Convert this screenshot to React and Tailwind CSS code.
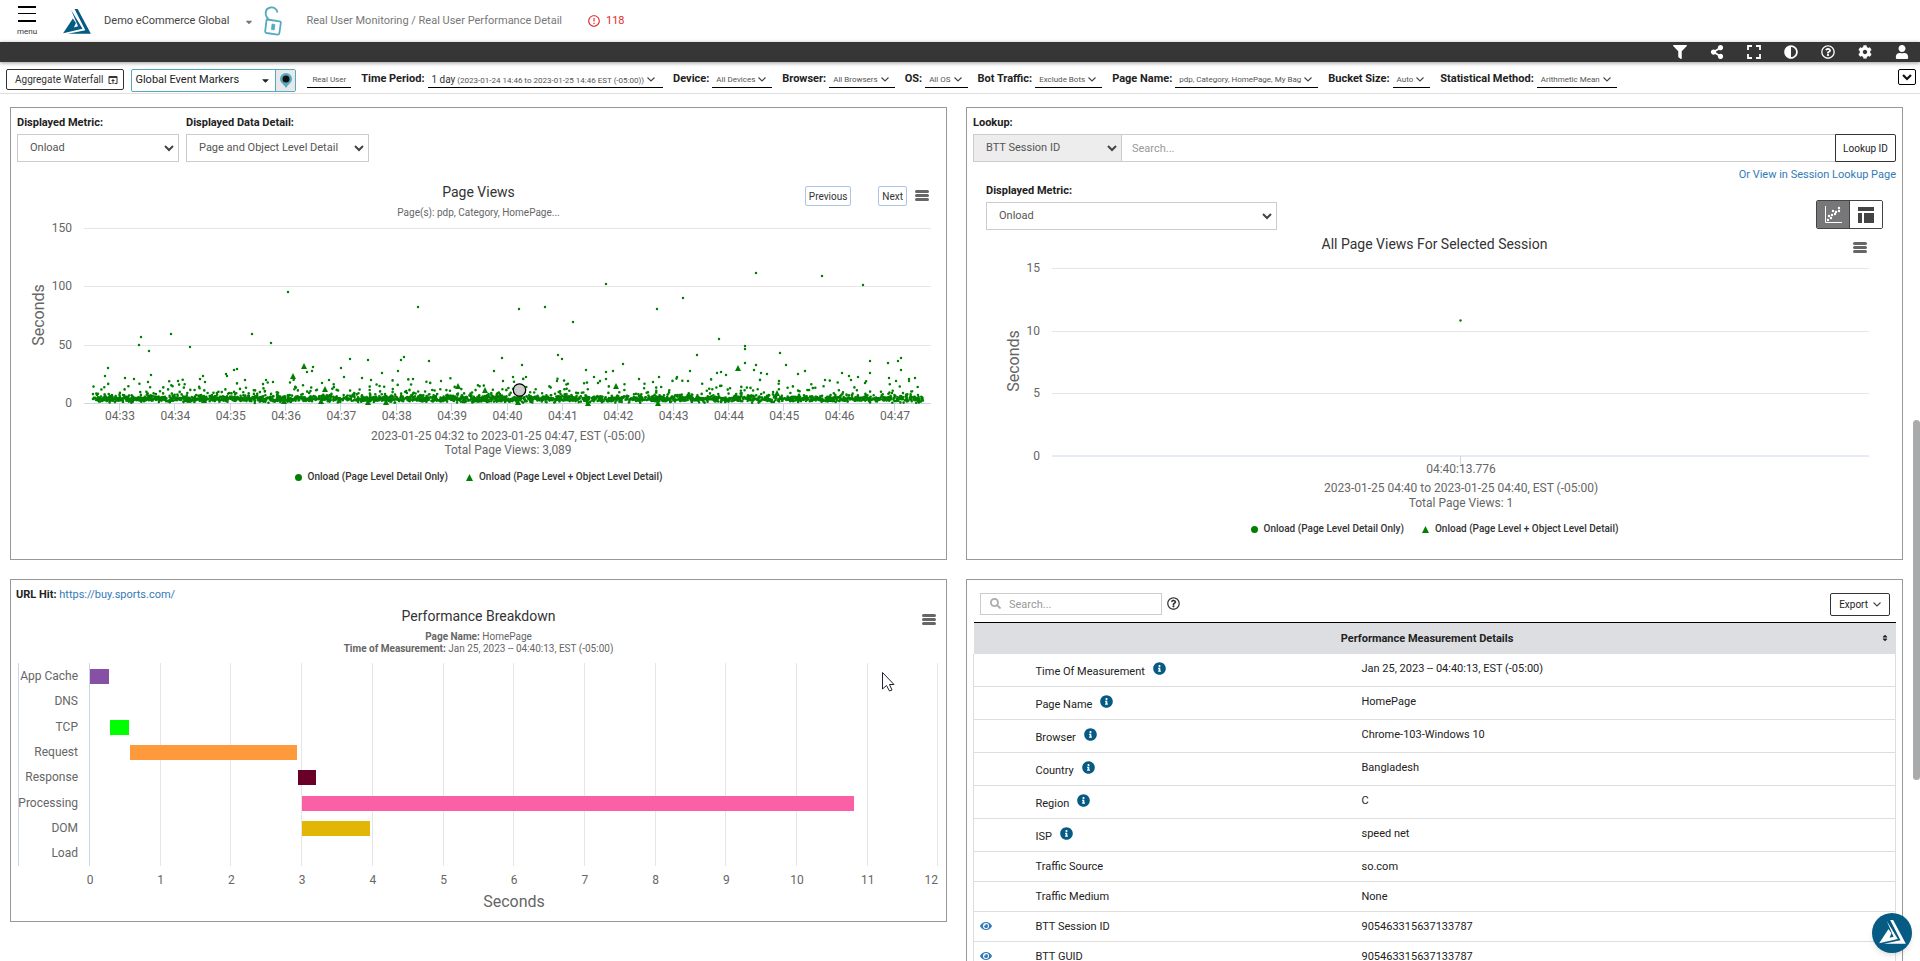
import React, { useState } from "react";
import { FaFilter, FaShareAlt, FaAdjust, FaRegQuestionCircle, FaCog, FaUser, FaSearch, FaInfoCircle, FaEye, FaSort, FaCaretDown } from "react-icons/fa";
import { MdOpenInBrowser, MdErrorOutline } from "react-icons/md";

const FILTERS = [
  { label: "Device:", value: "All Devices" },
  { label: "Browser:", value: "All Browsers" },
  { label: "OS:", value: "All OS" },
  { label: "Bot Traffic:", value: "Exclude Bots" },
  { label: "Page Name:", value: "pdp, Category, HomePage, My Bag" },
  { label: "Bucket Size:", value: "Auto" },
  { label: "Statistical Method:", value: "Arithmetic Mean" },
];

const DETAILS = [
  { name: "Time Of Measurement", value: "Jan 25, 2023 -- 04:40:13, EST (-05:00)", info: true },
  { name: "Page Name", value: "HomePage", info: true },
  { name: "Browser", value: "Chrome-103-Windows 10", info: true },
  { name: "Country", value: "Bangladesh", info: true },
  { name: "Region", value: "C", info: true },
  { name: "ISP", value: "speed net", info: true },
  { name: "Traffic Source", value: "so.com" },
  { name: "Traffic Medium", value: "None" },
  { name: "BTT Session ID", value: "905463315637133787", link: true },
  { name: "BTT GUID", value: "905463315637133787", link: true },
];

// slow page views, in chart coordinates
const SLOW = [
  [277, 70], [407, 85], [130, 115], [128, 123], [138, 129], [160, 112], [179, 125], [241, 112], [260, 121],
  [97, 146], [94, 154], [114, 156], [123, 157], [140, 153], [137, 160], [167, 159], [192, 154], [189, 157],
  [194, 160], [215, 152], [216, 154], [223, 148], [226, 147], [234, 158], [255, 158], [262, 160], [302, 145],
  [301, 149], [296, 150], [330, 146], [339, 137], [333, 155], [357, 138], [351, 156], [360, 158], [371, 151],
  [387, 149], [390, 138], [393, 135], [402, 157], [418, 139], [430, 159], [483, 149], [318, 158], [311, 161],
  [508, 87], [534, 85], [562, 100], [595, 62], [646, 87], [672, 76], [745, 51], [811, 54], [852, 63],
  [708, 117], [734, 124], [734, 127], [734, 141], [745, 143], [743, 148], [750, 151], [756, 152], [769, 131],
  [775, 143], [787, 152], [794, 149], [831, 151], [859, 139], [859, 151], [877, 141], [887, 139], [890, 136],
  [890, 148], [878, 156], [898, 157], [904, 156], [885, 159], [898, 159], [491, 136], [511, 143], [502, 155],
  [515, 155], [492, 159], [547, 133], [551, 137], [575, 148], [583, 155], [546, 159], [595, 150], [602, 149],
  [612, 142], [595, 157], [628, 157], [648, 155], [642, 160], [666, 155], [679, 149], [686, 133], [677, 159],
  [706, 151], [710, 150], [715, 153], [814, 158], [838, 154], [847, 155], [840, 158], [854, 161], [768, 159],
];

const OBJECT_LEVEL = [
  [293, 144], [282, 154], [314, 167], [447, 164], [474, 168], [357, 180], [375, 180], [310, 179], [273, 179],
  [193, 178], [486, 173], [605, 164], [727, 146], [647, 181], [577, 181], [766, 171], [507, 180],
];

const TIMES = ["04:33", "04:34", "04:35", "04:36", "04:37", "04:38", "04:39", "04:40", "04:41", "04:42", "04:43", "04:44", "04:45", "04:46", "04:47"];

const PHASES = [
  { name: "App Cache", x: 79, w: 19, color: "#8650a5" },
  { name: "DNS" },
  { name: "TCP", x: 99, w: 19, color: "#00ff00" },
  { name: "Request", x: 119, w: 167, color: "#ff9a3c" },
  { name: "Response", x: 287, w: 18, color: "#680028" },
  { name: "Processing", x: 291, w: 552, color: "#fb5fa5" },
  { name: "DOM", x: 291, w: 68, color: "#e2b607" },
  { name: "Load" },
];

function random(seed) {
  let s = seed;
  return () => {
    s = (s * 16807) % 2147483647;
    return s / 2147483647;
  };
}

// the dense band of fast page views along the bottom of the chart
function fastViews() {
  const rnd = random(77);
  let d = "";
  for (let i = 0; i < 2900; i++) {
    const x = 82 + rnd() * 830;
    const spread = (rnd() + rnd() + rnd() - 1.5) * 3;
    const tail = rnd() < 0.25 ? Math.min(-Math.log(1 - rnd()) * 5, 19) : 0;
    d += `M${x.toFixed(1)} ${(177 + spread - tail).toFixed(1)}h0`;
  }
  return d;
}

const FAST_PATH = fastViews();
const SLOW_PATH = SLOW.map(([x, y]) => `M${x} ${y}h0`).join("");

function Logo({ className }) {
  return (
    <svg viewBox="0 0 80 72" className={className} fill="currentColor" aria-hidden="true">
      <path d="M33 0 L42 0 L80 71 L14 71 L64 61 Z" />
      <path d="M23 3 L56 57 L0 70 L28 27 L37 40 L31 53 L43 50 Z" />
    </svg>
  );
}

function Chevron() {
  return (
    <svg viewBox="0 0 8 5" className="h-[5px] w-[8px]" fill="none" stroke="#444" aria-hidden="true">
      <path d="M0.500 0.500 L4 4 L7.500 0.500" strokeWidth="1.100" />
    </svg>
  );
}

function MenuButton({ className = "" }) {
  return (
    <button aria-label="Chart menu" className={`flex w-[14px] flex-col gap-px ${className}`}>
      <span className="h-[3px] w-full rounded-sm bg-[#666]" />
      <span className="h-[3px] w-full rounded-sm bg-[#666]" />
      <span className="h-[3px] w-full rounded-sm bg-[#666]" />
    </button>
  );
}

function SelectBox({ id, label, value, className, selectClass = "bg-white", hideLabel }) {
  return (
    <div className={className}>
      {!hideLabel && (
        <label htmlFor={id} className="mb-[3px] block text-[11px] leading-4 font-bold text-[#222]">{label}</label>
      )}
      <div className="relative">
        <select
          id={id}
          aria-label={label}
          className={`block h-[28px] w-full appearance-none border border-[#ccc] pl-3 text-[11px] text-[#555] ${selectClass}`}
        >
          <option>{value}</option>
        </select>
        <svg viewBox="0 0 10 7" className="pointer-events-none absolute top-[11px] right-[5px] h-[7px] w-[10px]">
          <path d="M1 1 L5 5 L9 1" fill="none" stroke="#444" strokeWidth="2" />
        </svg>
      </div>
    </div>
  );
}

function Legend() {
  return (
    <div className="flex items-center justify-center gap-[18px] text-[10px] leading-4 font-medium text-[#333]">
      <span className="flex items-center gap-[6px]">
        <svg viewBox="0 0 8 8" className="h-[7px] w-[7px]"><circle cx="4" cy="4" r="4" fill="#008000" /></svg>
        Onload (Page Level Detail Only)
      </span>
      <span className="flex items-center gap-[6px]">
        <svg viewBox="0 0 8 8" className="h-[7px] w-[7px]"><path d="M4 0 L8 8 H0 Z" fill="#008000" /></svg>
        Onload (Page Level + Object Level Detail)
      </span>
    </div>
  );
}

function Header() {
  return (
    <header className="flex h-[42px] items-center bg-white pl-[17px] text-[11px]">
      <button className="flex flex-col items-center text-[8px] leading-3 text-[#333]">
        <span className="mt-px h-[2px] w-[18px] bg-black" />
        <span className="mt-[5px] h-px w-[18px] bg-black" />
        <span className="mt-[6px] mb-1 h-[2px] w-[18px] bg-black" />
        menu
      </button>
      <Logo className="ml-[26px] h-[25px] w-[28px] text-[#055b83]" />
      <button className="ml-[13px] flex items-center gap-[15px] pt-px text-[#444]">
        Demo eCommerce Global
        <FaCaretDown className="text-[10px] text-[#777]" />
      </button>
      <svg viewBox="0 0 18 30" className="ml-[10px] h-[30px] w-[18px]" fill="none" stroke="#55aabf" strokeWidth="1.800" strokeLinejoin="round">
        <path d="M3.500 13.500 L15.500 15.300 Q17 15.500 16.800 17 L15.400 27 Q15 28.800 13.500 28.600 L2.500 27 Q1 26.700 1.200 25.200 L2.600 13.500 Z" />
        <path d="M4.500 13 C0 9 1 2.500 6.500 1.500 C10 1 13 3 13.500 6.500" />
        <path d="M8 18 L11 18.500 L10.300 24 L7.300 23.500 Z" fill="#55aabf" strokeWidth="0.600" />
      </svg>
      <nav className="ml-[24px] text-[#777]">Real User Monitoring / Real User Performance Detail</nav>
      <span className="ml-[25px] flex items-center gap-[5px] text-[#e02b2b]">
        <MdErrorOutline className="text-[14px]" />
        118
      </span>
    </header>
  );
}

function Toolbar() {
  return (
    <div className="relative z-10 flex h-[20px] items-center justify-end gap-[23px] bg-[#363636] pr-[11px] text-[14px] text-white shadow-[0_1px_4px_rgba(0,0,0,0.4)]">
      <button aria-label="Filter"><FaFilter /></button>
      <button aria-label="Share"><FaShareAlt /></button>
      <button aria-label="Full screen">
        <svg viewBox="0 0 14 14" className="h-[14px] w-[14px]" fill="none" stroke="currentColor" strokeWidth="1.800">
          <path d="M1 5V1H5 M9 1H13V5 M13 9V13H9 M5 13H1V9" />
        </svg>
      </button>
      <button aria-label="Contrast"><FaAdjust /></button>
      <button aria-label="Help"><FaRegQuestionCircle /></button>
      <button aria-label="Settings"><FaCog /></button>
      <button aria-label="Account"><FaUser /></button>
    </div>
  );
}

function FilterBar() {
  return (
    <div className="flex h-[32px] items-start border-b border-[#ddd] bg-white pt-[7px] pl-[6px] text-[11px] text-[#222]">
      <button className="flex h-[21px] items-center gap-[4px] rounded-xs border border-[#333] pr-[4px] pl-[8px] text-[10px] text-[#333]">
        Aggregate Waterfall
        <MdOpenInBrowser className="text-[12px]" />
      </button>
      <div className="ml-[7px] flex h-[23px] w-[165px] rounded-xs border border-[#55aabf]">
        <div className="relative flex-1">
          <select aria-label="Global Event Markers" className="h-full w-full appearance-none pl-[3px]">
            <option>Global Event Markers</option>
          </select>
          <FaCaretDown className="pointer-events-none absolute top-[5px] right-1 text-[11px]" />
        </div>
        <button aria-label="Marker settings" className="flex w-[20px] items-center justify-center border-l border-[#55aabf] bg-[#e8e8e8]">
          <svg viewBox="0 0 12 15" className="h-[15px] w-[12px]">
            <path d="M6 15 C4 11 0 10 0 6 A6 6 0 0 1 12 6 C12 10 8 11 6 15 Z" fill="#55aabf" />
            <circle cx="6" cy="6" r="3.500" fill="#111" />
          </svg>
        </button>
      </div>
      <div className="flex items-center gap-[10px] pt-px">
        <button className="ml-[11px] h-[18px] border-b border-black px-[5px] pt-[2px] text-[8px] text-[#555]">Real User</button>
        <div className="flex items-center gap-[3px]">
          <span className="font-bold">Time Period:</span>
          <button className="flex h-[18px] items-center gap-[3px] border-b border-black pt-[2px] pr-[8px] pl-1 text-[8px] text-[#555]">
            <span className="whitespace-pre"><span className="text-[10px] text-[#333]">1 day</span> (2023-01-24 14:46 to 2023-01-25 14:46 EST (-05:00))</span>
            <Chevron />
          </button>
        </div>
        {FILTERS.map((f) => (
          <div key={f.label} className="flex items-center gap-[3px]">
            <span className="font-bold">{f.label}</span>
            <button className="flex h-[18px] items-center gap-[3px] border-b border-black pt-[2px] pr-[6px] pl-1 text-[8px] text-[#555]">
              {f.value}
              <Chevron />
            </button>
          </div>
        ))}
      </div>
      <button aria-label="Collapse filters" className="mr-1 ml-auto flex h-[16px] w-[18px] items-center justify-center rounded-xs border border-black">
        <svg viewBox="0 0 10 7" className="h-[7px] w-[10px]">
          <path d="M1 1 L5 5 L9 1" fill="none" stroke="#111" strokeWidth="2.200" />
        </svg>
      </button>
    </div>
  );
}

function PageViewsPanel() {
  return (
    <section className="border border-[#999] pt-[7px]">
      <div className="flex gap-[7px] pl-[6px]">
        <SelectBox id="metric" label="Displayed Metric:" value="Onload" className="w-[162px]" />
        <SelectBox id="detail" label="Displayed Data Detail:" value="Page and Object Level Detail" className="w-[183px]" />
      </div>
      <div className="relative mt-[20px] text-center">
        <h2 className="text-[14px] leading-5 text-[#333]">Page Views</h2>
        <p className="mt-[3px] text-[10px] leading-4 text-[#666]">Page(s): pdp, Category, HomePage...</p>
        <div className="absolute top-[4px] right-[17px] flex items-start text-[10px] text-[#333]">
          <button className="h-[20px] rounded-xs border border-[#adc4e8] px-[3px]">Previous</button>
          <button className="ml-[27px] h-[20px] rounded-xs border border-[#adc4e8] px-[3px]">Next</button>
          <MenuButton className="mt-1 ml-[8px]" />
        </div>
      </div>
      <svg viewBox="0 0 935 236" className="mt-px w-full">
        {[150, 100, 50].map((v) => (
          <g key={v}>
            <path d={`M73 ${Math.round(181 - v * 1.17) + 0.5}H920`} stroke="#e6e6e6" />
            <text x="61" y={185 - v * 1.17} textAnchor="end" fontSize="12" fill="#666">{v}</text>
          </g>
        ))}
        <text x="61" y="185" textAnchor="end" fontSize="12" fill="#666">0</text>
        <path d="M73 181.500H920" stroke="#ccd6eb" />
        <text x="-93" y="33" textAnchor="middle" fontSize="16" fill="#666" transform="rotate(-90)">Seconds</text>
        {TIMES.map((t, i) => (
          <g key={t}>
            <path d={`M${108.5 + Math.round(i * 55.36)} 181V189`} stroke="#ccd6eb" />
            <text x={109 + i * 55.36} y="198" textAnchor="middle" fontSize="12" fill="#666">{t}</text>
          </g>
        ))}
        <path d={FAST_PATH} stroke="#008000" strokeWidth="2.600" strokeLinecap="round" />
        <path d={SLOW_PATH} stroke="#008000" strokeWidth="2.500" strokeLinecap="round" />
        {OBJECT_LEVEL.map(([x, y]) => (
          <path key={`${x}-${y}`} d={`M${x} ${y - 3} L${x + 3} ${y + 3} H${x - 3} Z`} fill="#008000" />
        ))}
        <circle cx="508.500" cy="168" r="6.200" fill="#ccc" stroke="#000" strokeWidth="1.300" />
        <text x="497" y="218" textAnchor="middle" fontSize="12" fill="#666">2023-01-25 04:32 to 2023-01-25 04:47, EST (-05:00)</text>
        <text x="497" y="232" textAnchor="middle" fontSize="12" fill="#666">Total Page Views: 3,089</text>
      </svg>
      <div className="mt-[11px]">
        <Legend />
      </div>
    </section>
  );
}

function LookupPanel() {
  return (
    <section className="border border-[#999] pt-[7px]">
      <div className="px-[6px]">
        <label htmlFor="lookup" className="mb-[3px] block text-[11px] leading-4 font-bold text-[#222]">Lookup:</label>
        <div className="flex">
          <SelectBox id="lookup-type" label="Lookup type" hideLabel value="BTT Session ID" className="w-[149px]" selectClass="bg-[#ededed]" />
          <input
            id="lookup"
            placeholder="Search..."
            className="-ml-px h-[28px] min-w-0 flex-1 border border-[#ccc] px-[10px] text-[11px] placeholder-[#999]"
          />
          <button className="-ml-px h-[28px] w-[61px] rounded-r-xs border border-[#333] text-[10px] text-[#222]">Lookup ID</button>
        </div>
        <div className="mt-[5px] text-right text-[11px] leading-4">
          <a href="#lookup" className="text-[#337ab7]">Or View in Session Lookup Page</a>
        </div>
      </div>
      <div className="flex items-end justify-between pr-[19px] pl-[19px]">
        <SelectBox id="session-metric" label="Displayed Metric:" value="Onload" className="w-[291px]" />
        <div className="mb-px flex h-[29px] w-[67px] overflow-hidden rounded-xs border border-[#444]">
          <button aria-label="Chart view" className="flex flex-1 items-center justify-center border-r border-[#444] bg-[#77777a]">
            <svg viewBox="0 0 17 17" className="h-[17px] w-[17px]" fill="#fff">
              <path d="M0.500 0V16.500H17" fill="none" stroke="#fff" />
              <path d="M3 14h0M6 12h0M4 10h0M7 9h0M10 8h0M8 5h0M11 6h0M14 5h0M14 2h0" stroke="#fff" strokeWidth="2.400" strokeLinecap="round" />
            </svg>
          </button>
          <button aria-label="Table view" className="flex flex-1 items-center justify-center bg-white">
            <svg viewBox="0 0 16 16" className="h-[16px] w-[16px]" fill="#444">
              <path d="M0 0H16V4H0Z M0 6H4V16H0Z M6 6H16V16H6Z" />
            </svg>
          </button>
        </div>
      </div>
      <div className="relative mt-[4px] text-center">
        <h2 className="text-[14px] leading-5 text-[#333]">All Page Views For Selected Session</h2>
        <MenuButton className="absolute top-[8px] right-[35px]" />
      </div>
      <svg viewBox="0 0 935 250" className="mt-[8px] w-full">
        {[15, 10, 5].map((v, i) => (
          <g key={v}>
            <path d={`M85 ${6.5 + Math.round(i * 62.5)}H902`} stroke="#e6e6e6" />
            <text x="73" y={10 + i * 62.5} textAnchor="end" fontSize="12" fill="#666">{v}</text>
          </g>
        ))}
        <text x="73" y="198" textAnchor="end" fontSize="12" fill="#666">0</text>
        <path d="M85 194H902 M493.500 194V202" stroke="#ccd6eb" fill="none" />
        <text x="-99" y="52" textAnchor="middle" fontSize="16" fill="#666" transform="rotate(-90)">Seconds</text>
        <circle cx="493.500" cy="58.500" r="1.200" fill="#008000" />
        <text x="494" y="211" textAnchor="middle" fontSize="12" fill="#666">04:40:13.776</text>
        <text x="494" y="230" textAnchor="middle" fontSize="12" fill="#666">2023-01-25 04:40 to 2023-01-25 04:40, EST (-05:00)</text>
        <text x="494" y="245" textAnchor="middle" fontSize="12" fill="#666">Total Page Views: 1</text>
      </svg>
      <div className="mt-[9px] pb-[22px]">
        <Legend />
      </div>
    </section>
  );
}

function BreakdownPanel() {
  return (
    <section className="self-start border border-[#999] pt-[7px]">
      <p className="pl-[5px] text-[11px] leading-4">
        <span className="font-bold text-[#222]">URL Hit:</span>{" "}
        <a href="https://buy.sports.com/" className="text-[#337ab7]">https://buy.sports.com/</a>
      </p>
      <div className="relative mt-[3px] text-center text-[#666]">
        <h2 className="text-[14px] leading-5 text-[#333]">Performance Breakdown</h2>
        <p className="mt-[5px] text-[10px] leading-3"><b>Page Name:</b> HomePage</p>
        <p className="text-[10px] leading-3"><b>Time of Measurement:</b> Jan 25, 2023 -- 04:40:13, EST (-05:00)</p>
        <MenuButton className="absolute top-[8px] right-[10px]" />
      </div>
      <svg viewBox="0 0 935 263" className="mt-[3px] w-full">
        {Array.from({ length: 13 }, (_, i) => (
          <g key={i}>
            <path d={`M${78.5 + Math.round(i * 70.7)} 5V208`} stroke={i === 0 ? "#ccd6eb" : "#e6e6e6"} />
            <text x={i === 12 ? 927 : 79 + i * 70.7} y="226" textAnchor={i === 12 ? "end" : "middle"} fontSize="12" fill="#666">{i}</text>
          </g>
        ))}
        <path d="M7.500 5V208" stroke="#ccd6eb" />
        {PHASES.map((p, i) => (
          <g key={p.name}>
            <text x="67" y={22 + i * 25.3} textAnchor="end" fontSize="12" fill="#666">{p.name}</text>
            {p.color && <rect x={p.x} y={11 + Math.round(i * 25.3)} width={p.w} height="15" fill={p.color} />}
          </g>
        ))}
        <text x="503" y="249" textAnchor="middle" fontSize="16" fill="#666">Seconds</text>
        <path d="M871.500 14.500 V31 L875.500 27.500 L878.500 33 L881 32 L878.500 26.500 H883 Z" fill="#fff" stroke="#223" />
      </svg>
    </section>
  );
}

function DetailsPanel() {
  const [query, setQuery] = useState("");
  const rows = DETAILS.filter((d) => d.name.toLowerCase().includes(query.toLowerCase()));

  return (
    <section className="border border-[#999] px-[6px] pt-[13px] text-[11px]">
      <div className="mb-[6px] flex items-start pr-[6px] pl-[7px]">
        <div className="relative">
          <FaSearch className="absolute top-[5px] left-[10px] text-[11px] text-[#aaa]" />
          <input
            aria-label="Search details"
            value={query}
            onChange={(e) => setQuery(e.target.value)}
            placeholder="Search..."
            className="h-[22px] w-[182px] border border-[#ccc] pl-[28px] placeholder-[#999]"
          />
        </div>
        <button aria-label="Search help" className="mt-1 ml-[5px] text-[13px] text-[#333]"><FaRegQuestionCircle /></button>
        <button className="ml-auto flex h-[23px] items-center gap-[5px] rounded-xs border border-[#333] px-2 text-[10px] text-[#222]">
          Export
          <Chevron />
        </button>
      </div>
      <table className="w-full border-collapse text-left leading-[13px] text-[#222]">
        <thead>
          <tr className="h-[31px] border-t border-black bg-[#dddee2]">
            <th colSpan="3" className="font-bold">
              <div className="flex items-center">
                <span className="flex-1 text-center">Performance Measurement Details</span>
                <FaSort className="mr-[7px] text-[8px]" />
              </div>
            </th>
          </tr>
        </thead>
        <tbody>
          {rows.map((d) => (
            <tr key={d.name} className="border border-t-0 border-[#ddd] align-top">
              <td className="w-[55px] py-2 pl-[6px]">
                {d.link && <a href="#session" aria-label={`View ${d.name}`} className="text-[#337ab7]"><FaEye className="text-[12px]" /></a>}
              </td>
              <td className="w-[326px] py-2 pl-[7px]">
                {d.info ? (
                  <span className="flex h-4 items-start gap-[8px]">
                    <span className="pt-[3px]">{d.name}</span>
                    <FaInfoCircle className="text-[13px] text-[#055b83]" />
                  </span>
                ) : (
                  d.name
                )}
              </td>
              <td className="py-2 pl-[7px]">{d.value}</td>
            </tr>
          ))}
        </tbody>
      </table>
    </section>
  );
}

export default function App() {
  return (
    <div className="h-screen overflow-hidden bg-white font-['Roboto',sans-serif]">
      <Header />
      <Toolbar />
      <FilterBar />
      <main className="grid grid-cols-2 gap-[19px] pt-[13px] pr-[17px] pl-[10px]">
        <PageViewsPanel />
        <LookupPanel />
        <BreakdownPanel />
        <DetailsPanel />
      </main>
      <button aria-label="Assistant" className="fixed right-2 bottom-2 flex h-[40px] w-[40px] items-center justify-center rounded-full bg-[#055b83] pb-0.5 text-white shadow-md">
        <Logo className="h-[24px] w-[27px]" />
      </button>
      <div className="fixed top-[43.7%] right-0 h-[37.5%] w-[7px] rounded-full bg-[#a9aaac]" />
    </div>
  );
}
